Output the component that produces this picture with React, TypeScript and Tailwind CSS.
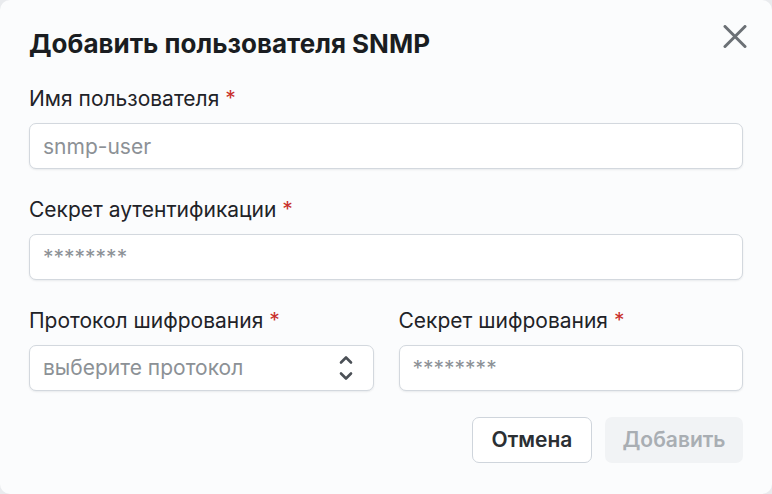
import React from 'react'

function Label({ children }: { children: React.ReactNode }) {
  return (
    <label className="block text-[21px] leading-[22px] text-[#1f2328]">
      {children} <span className="text-[#c9302c]">*</span>
    </label>
  )
}

function TextInput({ placeholder }: { placeholder: string }) {
  return (
    <input
      placeholder={placeholder}
      className="mt-[13px] block h-[46px] w-full rounded-[7px] border border-[#d3d8de] bg-white px-[13px] text-[21px] text-[#1f2328] shadow-[0_1px_2px_rgba(16,24,40,0.08)] outline-none placeholder:text-[#8c9196]"
    />
  )
}

export default function App() {
  return (
    <div className="h-[494px] w-[772px] bg-[#e9ebee] font-['Inter',sans-serif]">
      <div className="relative h-full w-full rounded-[10px] bg-[#fbfcfd] px-[29px] pt-[30px]">
        <button className="absolute right-[25px] top-[25px] text-[#6b7075]">
          <svg width="24" height="23" viewBox="0 0 24 23" fill="none" stroke="currentColor" strokeWidth="3" strokeLinecap="round">
            <path d="M2 1.5 22 21.5M22 1.5 2 21.5" />
          </svg>
        </button>

        <h2 className="text-[26px] font-bold leading-[28px] text-[#1a1d21]">
          Добавить пользователя SNMP
        </h2>

        <div className="mt-[30px]">
          <Label>Имя пользователя</Label>
          <TextInput placeholder="snmp-user" />
        </div>

        <div className="mt-[30px]">
          <Label>Секрет аутентификации</Label>
          <TextInput placeholder="********" />
        </div>

        <div className="mt-[30px] grid grid-cols-2 gap-[25px]">
          <div>
            <Label>Протокол шифрования</Label>
            <div className="relative mt-[13px] flex h-[46px] items-center rounded-[7px] border border-[#d3d8de] bg-white px-[13px] shadow-[0_1px_2px_rgba(16,24,40,0.08)]">
              <span className="text-[21px] text-[#8c9196]">выберите протокол</span>
              <svg
                className="absolute right-[20px] text-[#4b5056]"
                width="14"
                height="28"
                viewBox="0 0 14 28"
                fill="none"
                stroke="currentColor"
                strokeWidth="2.6"
                strokeLinecap="round"
                strokeLinejoin="round"
              >
                <path d="M2 8.5 7 3.5 12 8.5M2 19.5 7 24.5 12 19.5" />
              </svg>
            </div>
          </div>
          <div>
            <Label>Секрет шифрования</Label>
            <TextInput placeholder="********" />
          </div>
        </div>

        <div className="mt-[26px] flex justify-end gap-[13px]">
          <button className="h-[46px] w-[120px] rounded-[7px] border border-[#cfd5dc] bg-white text-[21px] font-semibold text-[#2b2f33]">
            Отмена
          </button>
          <button className="h-[46px] w-[138px] rounded-[7px] bg-[#f1f3f5] text-[21px] font-semibold text-[#a9aeb3]">
            Добавить
          </button>
        </div>
      </div>
    </div>
  )
}
